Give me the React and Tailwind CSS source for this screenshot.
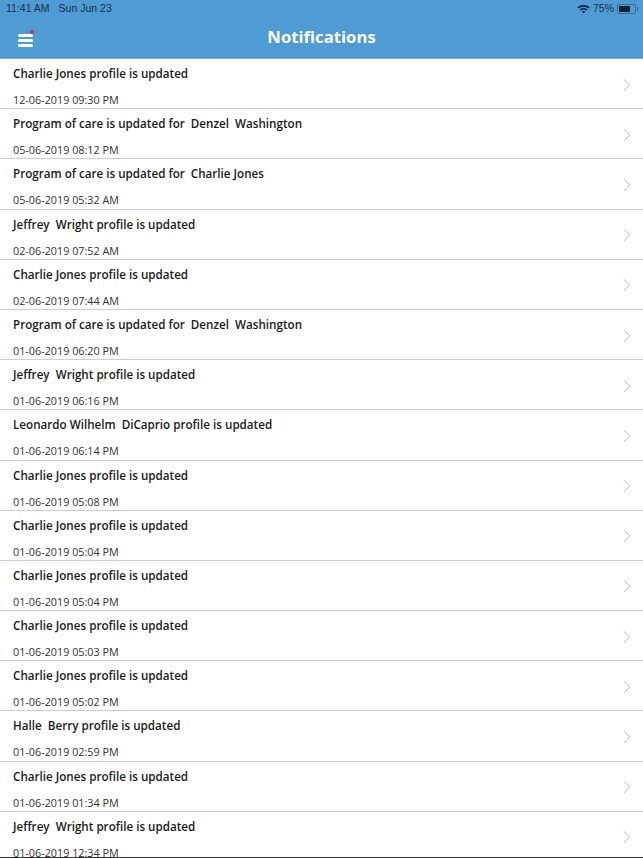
import { ChevronRight } from 'lucide-react';

const items = [
  ['Charlie Jones profile is updated', '12-06-2019 09:30 PM'],
  ['Program of care is updated for  Denzel  Washington', '05-06-2019 08:12 PM'],
  ['Program of care is updated for  Charlie Jones', '05-06-2019 05:32 AM'],
  ['Jeffrey  Wright profile is updated', '02-06-2019 07:52 AM'],
  ['Charlie Jones profile is updated', '02-06-2019 07:44 AM'],
  ['Program of care is updated for  Denzel  Washington', '01-06-2019 06:20 PM'],
  ['Jeffrey  Wright profile is updated', '01-06-2019 06:16 PM'],
  ['Leonardo Wilhelm  DiCaprio profile is updated', '01-06-2019 06:14 PM'],
  ['Charlie Jones profile is updated', '01-06-2019 05:08 PM'],
  ['Charlie Jones profile is updated', '01-06-2019 05:04 PM'],
  ['Charlie Jones profile is updated', '01-06-2019 05:04 PM'],
  ['Charlie Jones profile is updated', '01-06-2019 05:03 PM'],
  ['Charlie Jones profile is updated', '01-06-2019 05:02 PM'],
  ['Halle  Berry profile is updated', '01-06-2019 02:59 PM'],
  ['Charlie Jones profile is updated', '01-06-2019 01:34 PM'],
  ['Jeffrey  Wright profile is updated', '01-06-2019 12:34 PM'],
];

function Wifi() {
  return (
    <svg width="13" height="10" viewBox="0 0 13 10" className="text-[#14304f]">
      <path d="M0.3 3.2 A9 9 0 0 1 12.7 3.2 L11.4 4.6 A7.2 7.2 0 0 0 1.6 4.6 Z" fill="currentColor" />
      <path d="M2.5 5.4 A5.8 5.8 0 0 1 10.5 5.4 L9.2 6.8 A4 4 0 0 0 3.8 6.8 Z" fill="currentColor" />
      <path d="M4.7 7.6 A2.6 2.6 0 0 1 8.3 7.6 L6.5 9.6 Z" fill="currentColor" />
    </svg>
  );
}

function Battery() {
  return (
    <div className="flex items-center">
      <div className="w-[19px] h-[10px] rounded-[2px] border border-[#3d6a95] p-[1px]">
        <div className="w-[75%] h-full bg-[#0f2238] rounded-[1px]" />
      </div>
      <div className="w-[1px] h-[4px] bg-[#3d6a95] ml-[1px]" />
    </div>
  );
}

export default function App() {
  return (
    <div className="w-[643px] h-[858px] overflow-hidden bg-white relative font-['Open_Sans',sans-serif]">
      <div className="h-[59px] bg-[#4f9bd3] border-b border-[#7fb5dd] relative">
        <div className="flex items-center justify-between h-[18px] pl-[6px] pr-[5px] font-['Liberation_Sans',sans-serif] text-[10.5px] text-[#14304f]">
          <div className="flex gap-[9px]">
            <span>11:41 AM</span>
            <span>Sun Jun 23</span>
          </div>
          <div className="flex items-center gap-[3px]">
            <Wifi />
            <span>75%</span>
            <Battery />
          </div>
        </div>
        <div className="flex items-center justify-center h-[38px]">
          <h1 className="text-[16.7px] font-bold text-white">Notifications</h1>
        </div>
        <div className="absolute left-[18px] top-[34px] w-[15px] flex flex-col gap-[2.5px]">
          <div className="h-[2.5px] bg-white rounded-full" />
          <div className="h-[2.5px] bg-white rounded-full" />
          <div className="h-[2.5px] bg-white rounded-full" />
        </div>
        <div className="absolute left-[30px] top-[30px] w-[4px] h-[4px] rounded-full bg-[#d8304f]" />
      </div>
      <div>
        {items.map((item, i) => (
          <div key={i} className="h-[50.2px] box-border border-b border-[#cfcfcf] flex items-center pl-[13px] pr-[5px]">
            <div className="flex-1 min-w-0 h-full">
              <p className="pt-[6px] text-[11.65px] leading-[18px] font-semibold text-[#1a1a1a] whitespace-pre">{item[0]}</p>
              <p className="pt-[10px] text-[10.8px] leading-[14px] text-[#333333] whitespace-pre">{item[1]}</p>
            </div>
            <ChevronRight size={22} strokeWidth={1} className="text-[#b5b5b5] mt-[2px]" />
          </div>
        ))}
      </div>
      <div className="absolute left-0 right-0 bottom-0 h-[1px] bg-[#333333]" />
    </div>
  );
}
